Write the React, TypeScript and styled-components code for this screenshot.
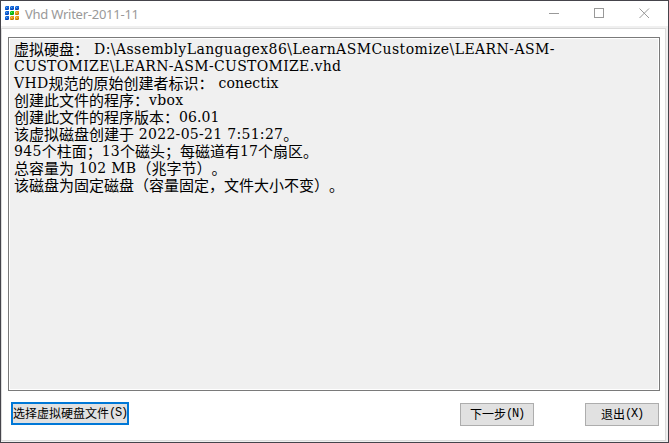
import React from "react";
import styled, { createGlobalStyle } from "styled-components";

const GlobalStyle = createGlobalStyle`
  * { box-sizing: border-box; }
  body { margin: 0; background: #fff; overflow: hidden; }
`;

const Window = styled.main`
  width: 669px;
  height: 443px;
  display: flex;
  flex-direction: column;
  background: #f0f0f0;
  border: 1px solid #45444b;
`;

const TitleBar = styled.header`
  height: 25px;
  flex: none;
  display: flex;
  align-items: center;
  background: #fff;
  padding-left: 4px;
`;

const Title = styled.h1`
  margin: 0 auto 0 5px;
  font: 400 13px/24px "Noto Sans", "Open Sans", sans-serif;
  letter-spacing: -0.25px;
  color: #999;
`;

const WindowControl = styled.button`
  width: 45px;
  height: 24px;
  padding: 0;
  border: 0;
  background: none;
  display: grid;
  place-items: center;
  position: relative;
  left: -1px;
  svg { display: block; }
`;

const Client = styled.section`
  flex: 1;
  margin: 2px 2px 1px 0;
  border: 1px solid #dcdcdc;
  background: #fff;
  padding: 8px 5px 0 6px;
  display: flex;
  flex-direction: column;
`;

const Details = styled.div`
  height: 354px;
  border: 1px solid #7a7a7a;
  background: #f0f0f0;
  box-shadow: inset 0 0 0 1px #fff;
  padding: 2px 4px 0 5px;
`;

const Line = styled.p`
  margin: 0;
  height: 17px;
  display: flex;
  white-space: pre;
  color: #000;
  font: 15px/17px "Noto Sans CJK SC", sans-serif;
  text-spacing-trim: space-all;
`;

const Run = styled.span<{ $width?: number; $spacing?: number }>`
  font: 14px/17px "DejaVu Serif", serif;
  width: ${(p) => (p.$width ? `${p.$width}px` : "auto")};
  letter-spacing: ${(p) => p.$spacing ?? 0.3}px;
  padding-top: 1px;
`;

const Actions = styled.footer`
  display: flex;
  align-items: flex-start;
  padding: 11px 0 0 3px;
`;

const Button = styled.button<{ $focused?: boolean; $width: number; $gap?: number }>`
  flex: none;
  width: ${(p) => p.$width}px;
  height: 23px;
  margin: ${(p) => (p.$focused ? 0 : 1)}px ${(p) => p.$gap ?? 0}px 0 0;
  padding: 0 0 2px;
  border: ${(p) => (p.$focused ? "2px solid #0078d7" : "1px solid #adadad")};
  background: #e1e1e1;
  color: #000;
  display: flex;
  align-items: center;
  justify-content: center;
  white-space: nowrap;
  font: 12px/16px "Noto Sans CJK SC", sans-serif;
`;

const Key = styled.span`
  font: 12px/16px "Liberation Mono", monospace;
  letter-spacing: -1.2px;
`;

const BLUE = "#1267d8";
const GOLD = "#e89a1a";
const tiles = [
  [BLUE, BLUE, BLUE],
  [BLUE, "#10c418", GOLD],
  [BLUE, GOLD, GOLD],
];

const AppIcon = () => (
  <svg width="15" height="15" viewBox="0 0 15 15">
    {tiles.map((row, y) =>
      row.map((fill, x) => (
        <g key={`${x}-${y}`} transform={`translate(${x * 5} ${y * 5})`}>
          <path d="M1 0H4V3L3 4H0V1Z" fill={fill} />
          <path d="M1 1H2V2H1Z" fill="#fff" opacity=".35" />
          <path
            d="M3 2H4V3L3 4H1V3H3Z"
            fill={fill === BLUE ? "#0a2c9c" : fill === GOLD ? "#a86500" : "#079010"}
            opacity=".7"
          />
        </g>
      ))
    )}
  </svg>
);

export default function App() {
  return (
    <>
      <GlobalStyle />
      <Window>
        <TitleBar>
          <AppIcon />
          <Title>Vhd Writer-2011-11</Title>
          <WindowControl aria-label="Minimize">
            <svg width="11" height="11"><path d="M0 5.5H10" stroke="#999" /></svg>
          </WindowControl>
          <WindowControl aria-label="Maximize">
            <svg width="11" height="11"><rect x=".5" y=".5" width="9" height="9" fill="none" stroke="#999" /></svg>
          </WindowControl>
          <WindowControl aria-label="Close">
            <svg width="11" height="11"><path d="M.5 .5L10 10M10 .5L.5 10" stroke="#999" /></svg>
          </WindowControl>
        </TitleBar>
        <Client>
          <Details>
            <Line>虚拟硬盘：<Run $width={5}> </Run><Run $spacing={0.42}>D:\AssemblyLanguagex86\LearnASMCustomize\LEARN-ASM-</Run></Line>
            <Line><Run $spacing={0.33}>CUSTOMIZE\LEARN-ASM-CUSTOMIZE.vhd</Run></Line>
            <Line><Run>VHD</Run>规范的原始创建者标识：<Run $width={5}> </Run><Run $spacing={0.08}>conectix</Run></Line>
            <Line>创建此文件的程序：<Run>vbox</Run></Line>
            <Line>创建此文件的程序版本：<Run $spacing={0.1}>06.01</Run></Line>
            <Line>该虚拟磁盘创建于<Run> 2022-05-21 7:51:27</Run>。</Line>
            <Line><Run>945</Run>个柱面；<Run>13</Run>个磁头；每磁道有<Run $spacing={0}>17</Run>个扇区。</Line>
            <Line>总容量为<Run> 102 MB</Run>（兆字节）。</Line>
            <Line>该磁盘为固定磁盘（容量固定，文件大小不变）。</Line>
          </Details>
          <Actions>
            <Button $focused $width={118} $gap={331}>选择虚拟硬盘文件<Key>(S)</Key></Button>
            <Button $width={74} $gap={51}>下一步<Key>(N)</Key></Button>
            <Button $width={74}>退出<Key>(X)</Key></Button>
          </Actions>
        </Client>
      </Window>
    </>
  );
}
